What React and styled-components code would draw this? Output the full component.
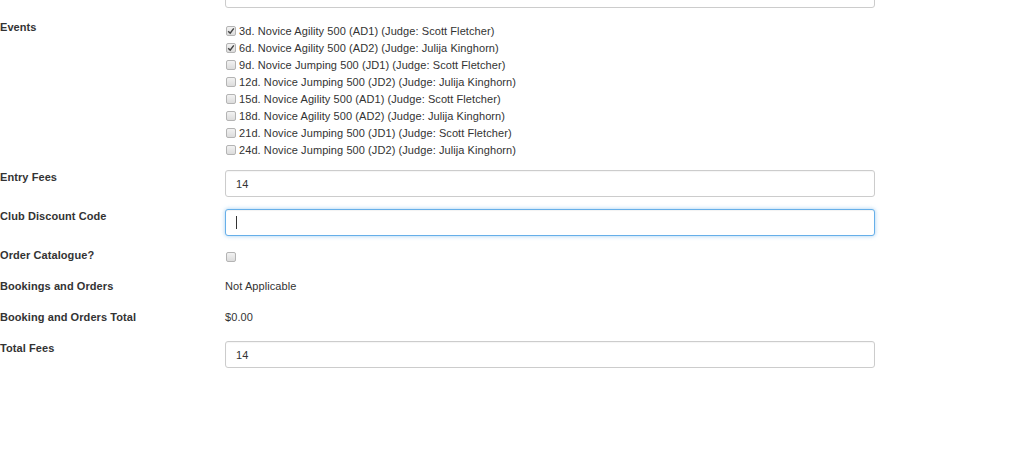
import React from "react";
import styled, {createGlobalStyle, css} from "styled-components";

const GlobalStyle = createGlobalStyle`
  html, body {
    margin: 0;
    padding: 0;
    background: #fff;
    overflow: hidden;
  }
  body {
    font-family: "Liberation Sans", Arial, sans-serif;
    font-size: 11px;
    letter-spacing: 0.08px;
    color: #333;
  }
`;

const Form = styled.div`
  width: 875px;
  margin-top: -19px;
`;

const Row = styled.div`
  display: grid;
  grid-template-columns: 225px 1fr;
  margin-bottom: 12px;
  min-height: ${p => p.$h || 0}px;
`;

const Label = styled.div`
  font-weight: bold;
  line-height: 15px;
`;

const Field = styled.div`
  height: 27px;
  box-sizing: border-box;
  border: 1px solid #ccc;
  border-radius: 3px;
  padding: 0 10px;
  display: flex;
  align-items: center;
  background: #fff;
  box-shadow: inset 0 1px 1px rgba(0, 0, 0, 0.04);
  ${p => p.$focus && css`
    border-color: #66afe9;
    box-shadow: inset 0 1px 1px rgba(0, 0, 0, 0.05), 0 0 4px rgba(102, 175, 233, 0.6);
  `}
`;

const Caret = styled.span`
  width: 1px;
  height: 13px;
  background: #333;
`;

const Value = styled.div`
  line-height: 15px;
`;

const EventList = styled.div`
  padding-top: 2px;
`;

const EventItem = styled.div`
  display: flex;
  align-items: center;
  height: 17px;
  gap: 3px;
`;

const Box = styled.span`
  width: 10px;
  height: 10px;
  box-sizing: border-box;
  border: 1px solid #b4b4b4;
  border-radius: 2px;
  background: linear-gradient(#f2f2f2, #dcdcdc);
  display: inline-flex;
  align-items: center;
  justify-content: center;
  margin-left: 1px;
`;

const CheckRow = styled.div`
  display: flex;
  align-items: center;
  height: 17px;
`;

const Checkbox = ({checked}) => (
    <Box>
        {checked && (
            <svg width="8" height="8" viewBox="0 0 8 8">
                <path d="M1.2 4.2 L3.2 6.2 L6.8 1.4" fill="none" stroke="#444" strokeWidth="1.5"/>
            </svg>
        )}
    </Box>
);

const events = [
    ["3d. Novice Agility 500 (AD1) (Judge: Scott Fletcher)", true],
    ["6d. Novice Agility 500 (AD2) (Judge: Julija Kinghorn)", true],
    ["9d. Novice Jumping 500 (JD1) (Judge: Scott Fletcher)", false],
    ["12d. Novice Jumping 500 (JD2) (Judge: Julija Kinghorn)", false],
    ["15d. Novice Agility 500 (AD1) (Judge: Scott Fletcher)", false],
    ["18d. Novice Agility 500 (AD2) (Judge: Julija Kinghorn)", false],
    ["21d. Novice Jumping 500 (JD1) (Judge: Scott Fletcher)", false],
    ["24d. Novice Jumping 500 (JD2) (Judge: Julija Kinghorn)", false],
];

export default function App() {
    return (
        <>
            <GlobalStyle/>
            <Form>
                <Row>
                    <Label/>
                    <Field/>
                </Row>
                <Row>
                    <Label>Events</Label>
                    <EventList>
                        {events.map(([text, checked]) => (
                            <EventItem key={text}>
                                <Checkbox checked={checked}/>
                                <span>{text}</span>
                            </EventItem>
                        ))}
                    </EventList>
                </Row>
                <Row>
                    <Label>Entry Fees</Label>
                    <Field>14</Field>
                </Row>
                <Row>
                    <Label>Club Discount Code</Label>
                    <Field $focus><Caret/></Field>
                </Row>
                <Row $h={19}>
                    <Label>Order Catalogue?</Label>
                    <CheckRow><Checkbox/></CheckRow>
                </Row>
                <Row $h={19}>
                    <Label>Bookings and Orders</Label>
                    <Value>Not Applicable</Value>
                </Row>
                <Row $h={19}>
                    <Label>Booking and Orders Total</Label>
                    <Value>$0.00</Value>
                </Row>
                <Row>
                    <Label>Total Fees</Label>
                    <Field>14</Field>
                </Row>
            </Form>
        </>
    );
}
